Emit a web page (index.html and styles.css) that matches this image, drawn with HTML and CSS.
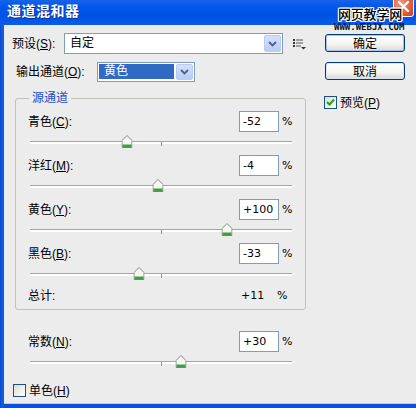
FILE: index.html
```html
<!DOCTYPE html>
<html lang="zh-CN">
<head>
<meta charset="utf-8">
<title>通道混和器</title>
<link rel="stylesheet" href="styles.css">
</head>
<body>
<div class="window">
  <div class="titlebar">
    <span class="title">通道混和器</span>
    <span class="close">
      <svg width="13" height="13" viewBox="0 0 13 13"><path d="M2 2 L11 11 M11 2 L2 11" stroke="#fff" stroke-width="2.4" stroke-linecap="round"/></svg>
    </span>
  </div>
  <div class="brand">
    <span class="brand-name">网页教学网</span>
    <span class="brand-url">WWW.WEBJX.COM</span>
  </div>

  <div class="client">
    <div class="main">
      <div class="preset-row">
        <span class="preset-lbl">预设(<u>S</u>):</span>
        <div class="combo preset-combo">
          <span class="combo-text">自定</span>
          <span class="drop"><svg width="9" height="6" viewBox="0 0 9 6"><path d="M1 1 L4.5 4.5 L8 1" fill="none" stroke="#4D6185" stroke-width="1.8"/></svg></span>
        </div>
        <svg class="menu-icon" width="13" height="11" viewBox="0 0 13 11">
          <rect x="0" y="0" width="2" height="2" fill="#333"/><rect x="3" y="0.5" width="7" height="1" fill="#555"/>
          <rect x="0" y="3" width="2" height="2" fill="#333"/><rect x="3" y="3.5" width="7" height="1" fill="#555"/>
          <rect x="0" y="6" width="2" height="2" fill="#333"/><rect x="3" y="6.5" width="5" height="1" fill="#555"/>
          <path d="M8 8 H13 L10.5 10.5 Z" fill="#333"/>
        </svg>
      </div>

      <div class="output-row">
        <span class="output-lbl">输出通道(<u>O</u>):</span>
        <div class="combo output-combo">
          <span class="combo-sel">黄色</span>
          <span class="drop"><svg width="9" height="6" viewBox="0 0 9 6"><path d="M1 1 L4.5 4.5 L8 1" fill="none" stroke="#4D6185" stroke-width="1.8"/></svg></span>
        </div>
      </div>

      <div class="group">
        <span class="group-title">源通道</span>

        <div class="channel">
          <div class="field"><span class="lbl">青色(<u>C</u>):</span><span class="num">-52</span><span class="pct">%</span></div>
          <div class="slider"><span class="thumb" style="left:37%"><svg width="11" height="13" viewBox="0 0 11 13"><path d="M5.5 0.5 L10.5 5.5 V12.5 H0.5 V5.5 Z" fill="#F6F6F4" stroke="#7D8C7D"/><rect x="1" y="9.5" width="9" height="3" fill="#3E9E43"/></svg></span></div>
        </div>

        <div class="channel">
          <div class="field"><span class="lbl">洋红(<u>M</u>):</span><span class="num">-4</span><span class="pct">%</span></div>
          <div class="slider"><span class="thumb" style="left:49%"><svg width="11" height="13" viewBox="0 0 11 13"><path d="M5.5 0.5 L10.5 5.5 V12.5 H0.5 V5.5 Z" fill="#F6F6F4" stroke="#7D8C7D"/><rect x="1" y="9.5" width="9" height="3" fill="#3E9E43"/></svg></span></div>
        </div>

        <div class="channel">
          <div class="field"><span class="lbl">黄色(<u>Y</u>):</span><span class="num">+100</span><span class="pct">%</span></div>
          <div class="slider"><span class="thumb" style="left:75%"><svg width="11" height="13" viewBox="0 0 11 13"><path d="M5.5 0.5 L10.5 5.5 V12.5 H0.5 V5.5 Z" fill="#F6F6F4" stroke="#7D8C7D"/><rect x="1" y="9.5" width="9" height="3" fill="#3E9E43"/></svg></span></div>
        </div>

        <div class="channel">
          <div class="field"><span class="lbl">黑色(<u>B</u>):</span><span class="num">-33</span><span class="pct">%</span></div>
          <div class="slider"><span class="thumb" style="left:41.75%"><svg width="11" height="13" viewBox="0 0 11 13"><path d="M5.5 0.5 L10.5 5.5 V12.5 H0.5 V5.5 Z" fill="#F6F6F4" stroke="#7D8C7D"/><rect x="1" y="9.5" width="9" height="3" fill="#3E9E43"/></svg></span></div>
        </div>

        <div class="total">
          <span class="lbl">总计:</span><span class="total-val">+11</span><span class="pct total-pct">%</span>
        </div>
      </div>

      <div class="constant">
        <div class="field"><span class="lbl">常数(<u>N</u>):</span><span class="num">+30</span><span class="pct">%</span></div>
        <div class="slider"><span class="thumb" style="left:57.5%"><svg width="11" height="13" viewBox="0 0 11 13"><path d="M5.5 0.5 L10.5 5.5 V12.5 H0.5 V5.5 Z" fill="#F6F6F4" stroke="#7D8C7D"/><rect x="1" y="9.5" width="9" height="3" fill="#3E9E43"/></svg></span></div>
      </div>

      <label class="check mono"><span class="box"></span>单色(<u>H</u>)</label>
    </div>

    <div class="side">
      <button class="btn btn-default">确定</button>
      <button class="btn">取消</button>
      <label class="check preview">
        <span class="box"><svg width="11" height="11" viewBox="0 0 11 11"><path d="M2 5 L4.5 7.5 L9 2.5" fill="none" stroke="#21A121" stroke-width="2"/></svg></span>预览(<u>P</u>)
      </label>
    </div>
  </div>
</div>
</body>
</html>
```

FILE: styles.css
```css
* { box-sizing: border-box; }

html, body {
  margin: 0;
  padding: 0;
}

body {
  width: 416px;
  height: 408px;
  overflow: hidden;
  background: #0B50DA;
  font: 12px/14px "Liberation Sans", "Noto Sans CJK SC", sans-serif;
  color: #000;
}

u { text-decoration: underline; text-underline-offset: 1px; }

/* window frame */
.window {
  position: relative;
  width: 416px;
  height: 408px;
  display: flex;
  flex-direction: column;
  background: linear-gradient(to right, #0A48CC 0, #1460E6 3px, #0B50DA 4px);
}

.titlebar {
  flex: none;
  height: 25px;
  display: flex;
  justify-content: space-between;
  align-items: flex-start;
  padding-left: 7px;
  background: linear-gradient(to bottom, #1A62E6 0%, #0058EE 25%, #0052E0 65%, #0A5CEA 100%);
}

.title {
  color: #fff;
  font: bold 14px/20px "Noto Sans CJK SC", sans-serif;
  letter-spacing: 0.5px;
  text-shadow: 1px 1px 0 #0A2A8E;
}

.close {
  width: 21px;
  height: 21px;
  margin: -4px 2px 0 0;
  border: 1px solid #fff;
  border-radius: 3px;
  background: radial-gradient(circle at 35% 35%, #F29A7C 0, #E0633E 55%, #C7401C 100%);
  display: flex;
  align-items: center;
  justify-content: center;
}

/* site stamp drawn over the corner */
.brand {
  position: absolute;
  top: 7px;
  left: 338px;
  display: flex;
  flex-direction: column;
  align-items: flex-start;
}

.brand-name {
  font: 500 13px/13px "Noto Sans CJK SC", sans-serif;
  color: #000;
  letter-spacing: -0.2px;
  text-shadow: 1px 0 #fff, -1px 0 #fff, 0 1px #fff, 0 -1px #fff,
               1px 1px #fff, -1px -1px #fff, 1px -1px #fff, -1px 1px #fff;
}

.brand-url {
  margin: 3px 0 0 -4px;
  font: bold 9px/9px "DejaVu Sans Mono", monospace;
  color: #111;
}

/* dialog body */
.client {
  flex: 1;
  display: flex;
  margin: 0 0 4px 4px;
  padding: 8px 0 0 8px;
  background: #ECECEC;
  border-bottom: 1px solid #B3C9F2;
}

.main {
  width: 294px;
  display: flex;
  flex-direction: column;
}

.side {
  width: 80px;
  margin-left: 19px;
  padding-top: 1px;
  display: flex;
  flex-direction: column;
}

/* preset row */
.preset-row {
  display: flex;
  align-items: center;
  height: 21px;
}

.preset-lbl { width: 52px; }

.combo {
  display: flex;
  align-items: stretch;
  background: #fff;
  border: 1px solid #7F9DB9;
}

.preset-combo {
  width: 219px;
  height: 21px;
}

.combo-text {
  flex: 1;
  padding-left: 5px;
  line-height: 19px;
}

.drop {
  width: 17px;
  margin: 1px;
  display: flex;
  align-items: center;
  justify-content: center;
  border: 1px solid #B8CBF4;
  border-radius: 2px;
  background: linear-gradient(to bottom, #D4E0FC, #B9CCF6);
}

.menu-icon {
  margin-left: 10px;
  margin-top: 2px;
}

/* output channel row */
.output-row {
  display: flex;
  align-items: center;
  margin-top: 8px;
  padding-left: 4px;
  height: 20px;
}

.output-lbl { width: 81px; }

.output-combo {
  width: 98px;
  height: 20px;
}

.combo-sel {
  flex: 1;
  margin: 1px 1px 2px 1px;
  padding-left: 5px;
  line-height: 15px;
  background: #316AC5;
  color: #fff;
}

/* source channels group */
.group {
  position: relative;
  margin: 16px 0 0 3px;
  width: 291px;
  border: 1px solid #C2C2BC;
  border-radius: 3px;
  padding: 12px 9px 6px 12px;
}

.group-title {
  position: absolute;
  top: -8px;
  left: 13px;
  padding: 0 3px;
  background: #ECECEC;
  color: #1A4FC4;
  line-height: 14px;
}

.channel + .channel { margin-top: 7px; }

.field {
  display: flex;
  align-items: center;
  height: 21px;
}

.lbl { flex: 1; }

.num {
  width: 40px;
  height: 21px;
  padding-left: 3px;
  line-height: 19px;
  font-family: "DejaVu Sans", sans-serif;
  font-size: 11px;
  background: #fff;
  border: 1px solid #7F9DB9;
}

.pct {
  width: 14px;
  margin-left: 3px;
  font-family: "DejaVu Sans", sans-serif;
  font-size: 11px;
}

/* slider */
.slider {
  position: relative;
  height: 13px;
  margin: 3px 4px 0 2px;
}

.slider::before {
  content: "";
  position: absolute;
  left: 0;
  right: 0;
  top: 6px;
  height: 2px;
  border-top: 1px solid #A4A4A0;
  background: #FFFFFF;
}

.slider::after {
  content: "";
  position: absolute;
  left: 50%;
  top: 7px;
  width: 1px;
  height: 4px;
  background: #8E8E8A;
}

.thumb {
  position: absolute;
  top: 0;
  width: 11px;
  height: 13px;
  transform: translateX(-50%);
  z-index: 1;
}

.thumb svg { display: block; }

/* total */
.total {
  display: flex;
  align-items: center;
  height: 14px;
  margin-top: 9px;
}

.total-val {
  width: 36px;
  font-family: "DejaVu Sans", sans-serif;
  font-size: 11px;
}

.total-pct {
  width: 11px;
  margin-left: 0;
  margin-right: 8px;
}

/* constant */
.constant {
  margin: 21px 0 0 3px;
  width: 291px;
  padding: 0 10px 0 13px;
}

/* checkboxes */
.check {
  display: flex;
  align-items: center;
  height: 13px;
}

.box {
  width: 13px;
  height: 13px;
  margin-right: 3px;
  border: 1px solid #1C5180;
  background: linear-gradient(135deg, #DCDCD7 0%, #FFFFFF 100%);
  display: flex;
  align-items: center;
  justify-content: center;
}

.mono {
  margin: 16px 0 0 1px;
}

.preview {
  margin: 16px 0 0 -1px;
}

/* buttons */
.btn {
  height: 18px;
  padding: 0;
  font: 12px/14px "Noto Sans CJK SC", sans-serif;
  color: #000;
  border: 1px solid #003C74;
  border-radius: 3px;
  background: linear-gradient(to bottom, #FFFFFF 0%, #F4F4F0 60%, #DCD8CE 100%);
  box-shadow: inset 0 0 0 1px #D8E3F8;
}

.btn + .btn { margin-top: 10px; }

.btn-default {
  box-shadow: inset 0 0 0 1px #A9C2F1;
}
```
